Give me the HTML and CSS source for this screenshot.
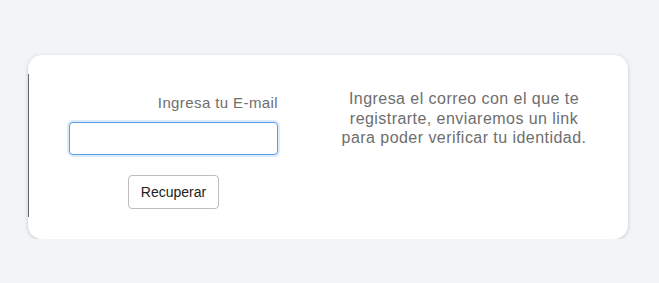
FILE: index.html
```html
<!DOCTYPE html>
<html lang="es">
<head>
  <meta charset="UTF-8">
  <title>Recuperar contraseña</title>
  <link rel="stylesheet" href="styles.css">
</head>
<body>

  <div class="recover-card">
    <div class="recover-row">
      <!-- Formulario -->
      <div class="recover-form">
        <label class="email-label" for="email">Ingresa tu E-mail</label>
        <input type="email" id="email" class="email-input">
        <button class="recover-button">Recuperar</button>
      </div>

      <!-- Ayuda -->
      <p class="recover-help">
        Ingresa el correo con el que te<br>
        registrarte, enviaremos un link<br>
        para poder verificar tu identidad.
      </p>
    </div>
  </div>

</body>
</html>
```

FILE: styles.css
```css
* { box-sizing: border-box; }

body {
  margin: 0;
  padding: 55px 31px 0 28px;
  background: #f3f4f6;
  font-family: 'Liberation Sans', Arial, Helvetica, sans-serif;
}

.recover-card {
  width: 600px;
  height: 184px;
  background: #fff;
  border-radius: 14px;
  box-shadow: 0 1px 4px rgba(0, 0, 0, 0.18);
  padding-top: 19px;
}

.recover-row {
  display: flex;
  height: 143px;
  border-left: 1px solid #666;
}

.recover-form {
  width: 209px;
  margin-left: 40px;
  display: flex;
  flex-direction: column;
  align-items: center;
}

.email-label {
  align-self: stretch;
  text-align: right;
  margin-top: 20px;
  font-size: 15px;
  letter-spacing: 0.4px;
  line-height: 17px;
  color: #6e6e6e;
}

.email-input {
  width: 209px;
  height: 33px;
  margin-top: 11px;
  border: 1px solid #5b9de6;
  border-radius: 4px;
  box-shadow: 0 0 0 2px rgba(120, 175, 240, 0.25);
  outline: none;
}

.recover-button {
  width: 91px;
  height: 34px;
  margin-top: 20px;
  padding: 0;
  background: #fff;
  border: 1px solid #bdbdbd;
  border-radius: 4px;
  font-family: inherit;
  font-size: 14px;
  color: #222;
}

.recover-help {
  width: 250px;
  margin: 15px 0 0 61px;
  text-align: center;
  font-size: 16px;
  letter-spacing: 0.45px;
  line-height: 19.5px;
  color: #6e6e6e;
}
```
